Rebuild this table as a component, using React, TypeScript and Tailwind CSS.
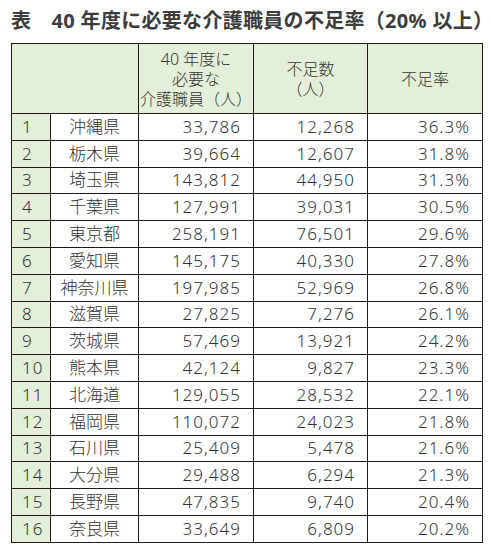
export default function App() {
  const rows: [string, string, string, string, string][] = [
    ["1", "沖縄県", "33,786", "12,268", "36.3%"],
    ["2", "栃木県", "39,664", "12,607", "31.8%"],
    ["3", "埼玉県", "143,812", "44,950", "31.3%"],
    ["4", "千葉県", "127,991", "39,031", "30.5%"],
    ["5", "東京都", "258,191", "76,501", "29.6%"],
    ["6", "愛知県", "145,175", "40,330", "27.8%"],
    ["7", "神奈川県", "197,985", "52,969", "26.8%"],
    ["8", "滋賀県", "27,825", "7,276", "26.1%"],
    ["9", "茨城県", "57,469", "13,921", "24.2%"],
    ["10", "熊本県", "42,124", "9,827", "23.3%"],
    ["11", "北海道", "129,055", "28,532", "22.1%"],
    ["12", "福岡県", "110,072", "24,023", "21.8%"],
    ["13", "石川県", "25,409", "5,478", "21.6%"],
    ["14", "大分県", "29,488", "6,294", "21.3%"],
    ["15", "長野県", "47,835", "9,740", "20.4%"],
    ["16", "奈良県", "33,649", "6,809", "20.2%"],
  ];

  return (
    <div
      className="w-[490px] h-[547px] bg-white text-[#333] overflow-hidden"
      style={{ fontFamily: '"Noto Sans", "Noto Sans CJK JP", sans-serif' }}
    >
      <h1 className="pl-[11px] pt-[8px] h-[43px] text-[20px] leading-[26px] font-bold tracking-[0.3px] text-[#3c3c3c] whitespace-nowrap">
        表　40 年度に必要な介護職員の不足率（20% 以上）
      </h1>

      <table className="ml-[11px] w-[471px] border-collapse table-fixed">
        <colgroup>
          <col className="w-[39px]" />
          <col className="w-[88px]" />
          <col className="w-[115px]" />
          <col className="w-[114px]" />
          <col className="w-[115px]" />
        </colgroup>
        <thead>
          <tr className="h-[70px] bg-[#e3efd9] text-[16px] leading-[20px] font-light">
            <th colSpan={2} className="border border-[#231815]" />
            <th className="border border-[#231815] font-light text-center">
              <div>40 年度に</div>
              <div>必要な</div>
              <div>介護職員（人）</div>
            </th>
            <th className="border border-[#231815] font-light text-center">
              <div>不足数</div>
              <div>（人）</div>
            </th>
            <th className="border border-[#231815] font-light text-center">
              不足率
            </th>
          </tr>
        </thead>
        <tbody className="text-[17px] font-light">
          {rows.map((r) => (
            <tr key={r[0]} className="h-[26.8px] leading-[20px]">
              <td className="border border-[#231815] bg-[#e3efd9] pl-[10px] tracking-[1px]">
                {r[0]}
              </td>
              <td className="border border-[#231815] text-center">{r[1]}</td>
              <td className="border border-[#231815] text-right pr-[12px] tracking-[1px]">
                {r[2]}
              </td>
              <td className="border border-[#231815] text-right pr-[12px] tracking-[1px]">
                {r[3]}
              </td>
              <td className="border border-[#231815] text-right pr-[12px] tracking-[1px]">
                {r[4]}
              </td>
            </tr>
          ))}
        </tbody>
      </table>
    </div>
  );
}
